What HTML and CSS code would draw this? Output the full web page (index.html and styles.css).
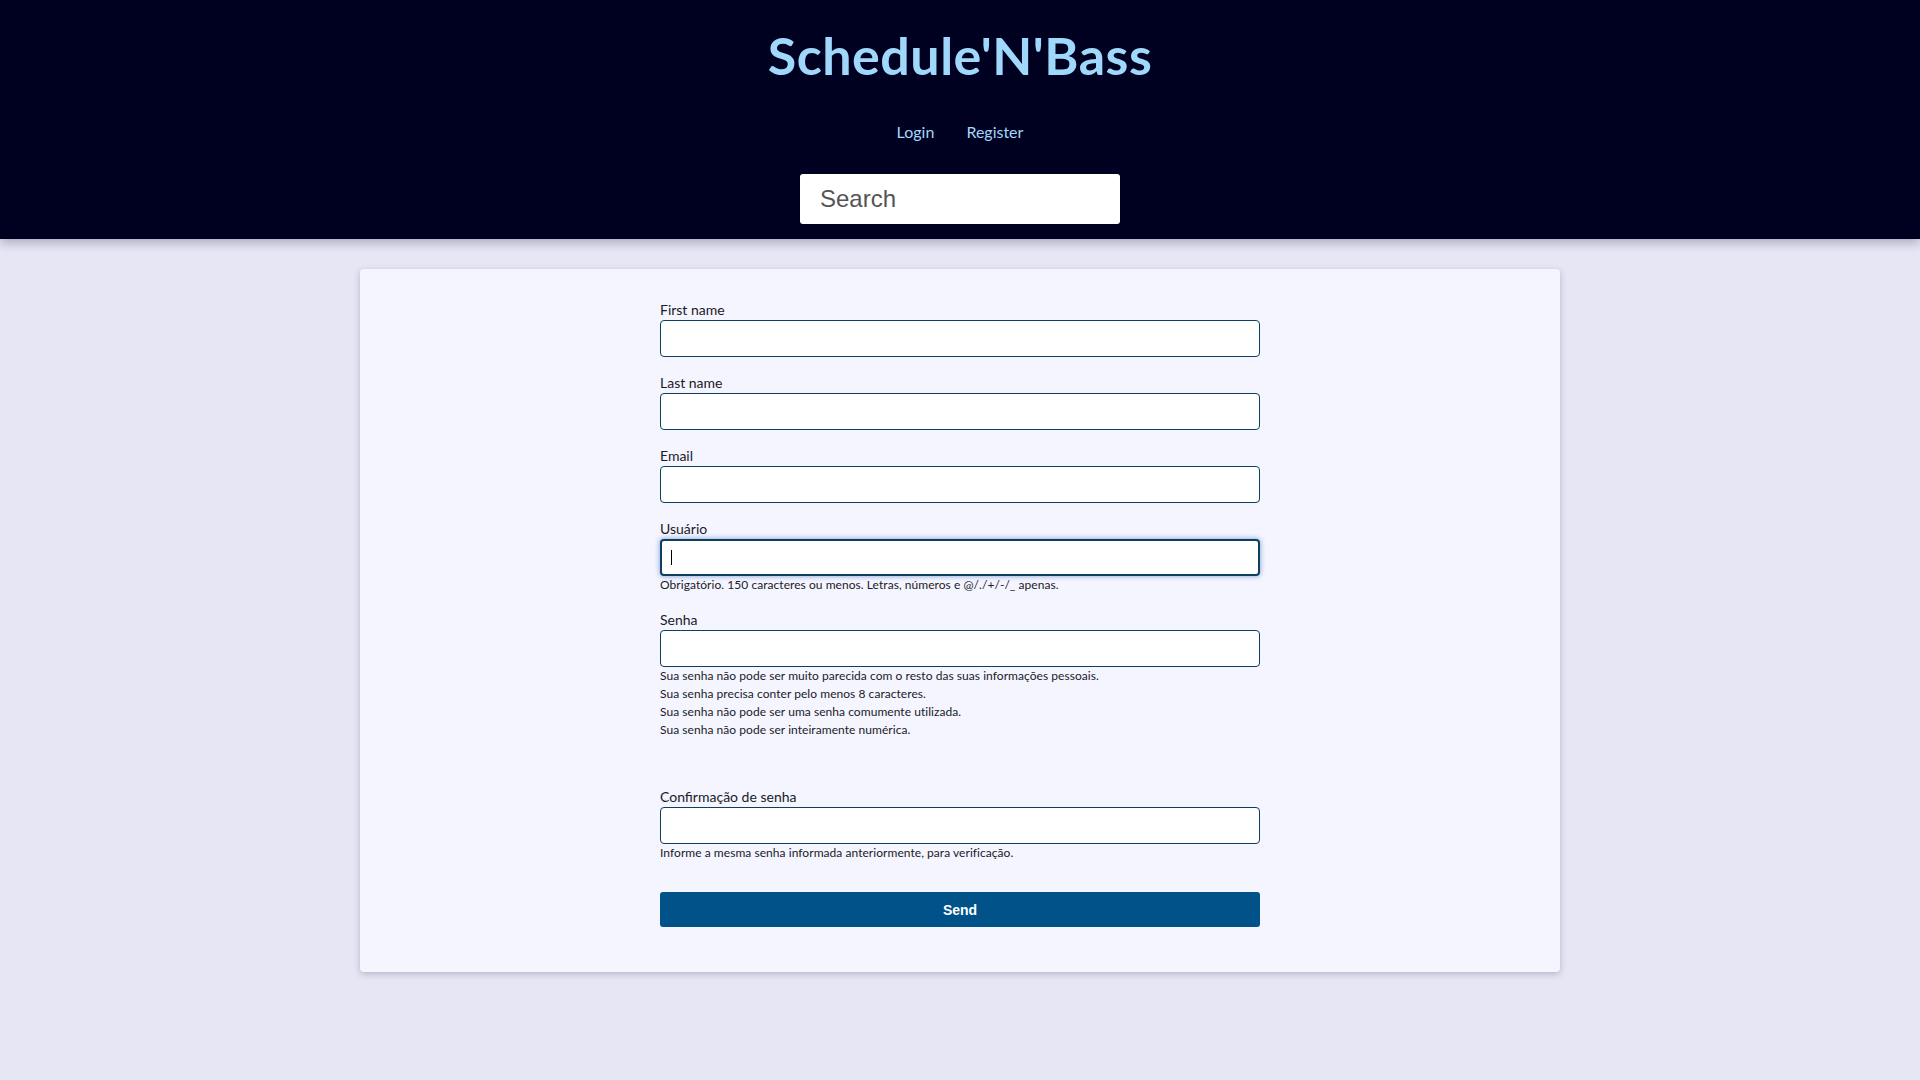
FILE: index.html
```html
<!DOCTYPE html>
<html lang="pt-BR">
<head>
<meta charset="utf-8">
<title>Schedule'N'Bass</title>
<link rel="stylesheet" href="styles.css">
</head>
<body>
<header class="site-header">
  <h1 class="brand">Schedule'N'Bass</h1>
  <nav class="nav">
    <a href="#" class="nav-link">Login</a>
    <a href="#" class="nav-link">Register</a>
  </nav>
  <input class="search" type="text" placeholder="Search">
</header>
<main class="page">
  <section class="card">
    <form class="form">
      <div class="field">
        <label class="label">First name</label>
        <input class="input" type="text">
      </div>
      <div class="field">
        <label class="label">Last name</label>
        <input class="input" type="text">
      </div>
      <div class="field">
        <label class="label">Email</label>
        <input class="input" type="email">
      </div>
      <div class="field">
        <label class="label">Usuário</label>
        <div class="input input-focus"><span class="caret"></span></div>
        <div class="help">Obrigatório. 150 caracteres ou menos. Letras, números e @/./+/-/_ apenas.</div>
      </div>
      <div class="field">
        <label class="label">Senha</label>
        <input class="input" type="password">
        <div class="help help-list">
          <div>Sua senha não pode ser muito parecida com o resto das suas informações pessoais.</div>
          <div>Sua senha precisa conter pelo menos 8 caracteres.</div>
          <div>Sua senha não pode ser uma senha comumente utilizada.</div>
          <div>Sua senha não pode ser inteiramente numérica.</div>
        </div>
      </div>
      <div class="field">
        <label class="label">Confirmação de senha</label>
        <input class="input" type="password">
        <div class="help">Informe a mesma senha informada anteriormente, para verificação.</div>
      </div>
      <button class="send" type="button">Send</button>
    </form>
  </section>
</main>
</body>
</html>
```
FILE: styles.css
```css
* { box-sizing: border-box; }
html, body { margin: 0; padding: 0; }
body {
  background: #e6e6f5;
  font-family: Lato, "Noto Sans", sans-serif;
  color: #1a1a2a;
  min-height: 1080px;
}
.site-header {
  background: #000020;
  height: 239px;
  display: flex;
  flex-direction: column;
  align-items: center;
  padding-top: 25px;
  box-shadow: 0 4px 10px rgba(0, 0, 30, 0.25);
  position: relative;
  z-index: 1;
}
.brand {
  margin: 0;
  font-family: Lato, "Noto Sans", sans-serif;
  font-weight: 700;
  font-size: 52px;
  line-height: 60px;
  color: #a0d8fc;
  letter-spacing: 0.5px;
}
.nav {
  display: flex;
  gap: 32px;
  margin-top: 35px;
  height: 24px;
}
.nav-link {
  color: #a0d8fc;
  text-decoration: none;
  font-size: 16px;
  line-height: 24px;
}
.search {
  margin-top: 30px;
  width: 320px;
  height: 50px;
  border: none;
  border-radius: 3px;
  background: #fff;
  padding: 0 20px;
  font-family: "Liberation Sans", Arial, sans-serif;
  font-size: 24px;
  color: #333;
  outline: none;
}
.search::placeholder { color: #555; }
.page {
  padding-top: 30px;
  display: flex;
  justify-content: center;
}
.card {
  width: 1200px;
  background: #f4f5fe;
  border-radius: 4px;
  box-shadow: 0 2px 6px rgba(40, 40, 80, 0.25);
  padding: 31px 0 45px;
  display: flex;
  justify-content: center;
}
.form {
  width: 600px;
  display: flex;
  flex-direction: column;
}
.field {
  display: flex;
  flex-direction: column;
  margin-bottom: 16px;
}
.label {
  font-size: 14px;
  line-height: 20px;
  color: #1a1a2a;
}
.input {
  width: 600px;
  height: 37px;
  border: 1px solid #0c3f60;
  border-radius: 4px;
  background: #fff;
  font-size: 14px;
  padding: 0 8px;
  outline: none;
}
.input-focus {
  border: 2px solid #0c3f60;
  box-shadow: 0 0 4px 1px rgba(70, 120, 200, 0.5);
  display: flex;
  align-items: center;
  padding: 0 9px;
}
.caret {
  display: block;
  width: 1px;
  height: 15px;
  background: #000;
}
.help {
  font-size: 12px;
  line-height: 18px;
  letter-spacing: 0.05px;
  color: #1a1a2a;
}
.help-list { margin-bottom: 32px; }
.field:last-of-type { margin-bottom: 30px; }
.send {
  width: 600px;
  height: 35px;
  border: none;
  border-radius: 3px;
  background: #005288;
  color: #fff;
  font-family: "Liberation Sans", Arial, sans-serif;
  font-weight: 700;
  font-size: 14px;
  cursor: pointer;
}
```
